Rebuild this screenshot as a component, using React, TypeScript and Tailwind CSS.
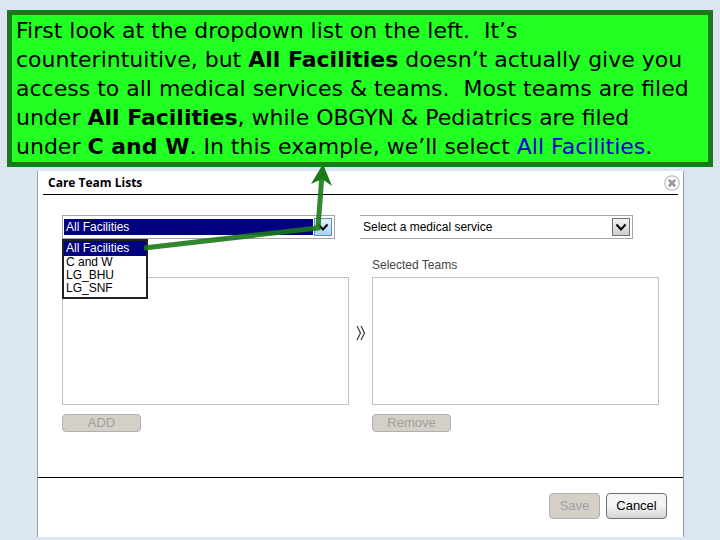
import { useState } from "react"

const facilities = ["All Facilities", "C and W", "LG_BHU", "LG_SNF"]

function Chevron() {
  return (
    <svg width="12" height="9" viewBox="0 0 12 9" aria-hidden="true">
      <path d="M1.5 1.5 L6 6.5 L10.5 1.5" fill="none" stroke="#000000" strokeWidth="2" />
    </svg>
  )
}

function TeamList({ id, label }: { id: string; label?: string }) {
  return <select id={id} multiple aria-label={label} className="h-32 w-full border border-[#c0c0c0] bg-white" />
}

export default function App() {
  const [facility, setFacility] = useState(facilities[0])

  return (
    <div className="relative flex min-h-screen flex-col bg-[#dce6f2] px-[7px] pt-[10px] font-['Liberation_Sans',Arial,sans-serif] text-xs text-black">
      <p className="border-5 border-[#1a7a1a] bg-[#22ff22] py-px pl-1 font-['Comic_Sans_MS','DejaVu_Sans',sans-serif] text-[22px] leading-[29px] whitespace-pre">
        First look at the dropdown list on the left.{"  "}It’s
        <br />
        counterintuitive, but <b>All Facilities</b> doesn’t actually give you
        <br />
        access to all medical services & teams.{"  "}Most teams are filed
        <br />
        under <b>All Facilities</b>, while OBGYN & Pediatrics are filed
        <br />
        under <b>C and W</b>. In this example, we’ll select <span className="text-[#0000d8]">All Facilities</span>.
      </p>

      <section className="mt-1 mr-[29px] ml-[30px] border-x border-[#9a9fa6] bg-white">
        <header className="mx-[5px] flex h-6 items-center justify-between border-b border-black pl-[5px]">
          <h1 className="font-['Tahoma','Open_Sans',sans-serif] text-xs font-bold">Care Team Lists</h1>
          <button type="button" aria-label="Close" className="-mr-0.5">
            <svg width="16" height="16" viewBox="0 0 16 16">
              <circle cx="8" cy="8" r="7.2" fill="#ffffff" stroke="#b4b8bb" strokeWidth="1.2" />
              <path d="M4.8 4.8 L11.2 11.2 M11.2 4.8 L4.8 11.2" stroke="#969ba0" strokeWidth="2.8" />
            </svg>
          </button>
        </header>

        <div className="grid grid-cols-2 gap-[25px] pt-5 pr-[50px] pl-6">
          <div className="relative">
            <div className="flex h-6 items-center border border-[#a6a6a6] pr-0.5 pl-px">
              <select
                aria-label="Facility"
                value={facility}
                onChange={(e) => setFacility(e.target.value)}
                className="h-4 min-w-0 flex-1 appearance-none bg-[#000080] pl-0.5 text-xs leading-4 text-white"
              >
                {facilities.map((f) => (
                  <option key={f}>{f}</option>
                ))}
              </select>
              <span className="pointer-events-none ml-px flex h-[18px] w-[18px] items-center justify-center border border-[#5c8fb5] bg-linear-to-b from-[#e4f3fc] to-[#a8d4f0]">
                <Chevron />
              </span>
            </div>
            <ul
              role="listbox"
              aria-label="Facilities"
              className="absolute top-6 left-0 z-10 w-[86px] border-2 border-[#202020] bg-white pb-0.5 leading-[13px]"
            >
              {facilities.map((f) => (
                <li
                  key={f}
                  role="option"
                  aria-selected={f === facility}
                  onClick={() => setFacility(f)}
                  className="cursor-default pl-0.5 aria-selected:bg-[#000080] aria-selected:py-px aria-selected:text-white"
                >
                  {f}
                </li>
              ))}
            </ul>
          </div>

          <div className="flex h-6 items-center border-y border-r border-[#a6a6a6] pr-0.5 pl-px">
            <select
              aria-label="Medical service"
              className="h-4 min-w-0 flex-1 appearance-none bg-white pl-0.5 text-xs leading-4"
            >
              <option>Select a medical service</option>
            </select>
            <span className="pointer-events-none flex h-[18px] w-[18px] items-center justify-center border border-[#707070] bg-linear-to-b from-[#f2f2f2] to-[#cfcfcf]">
              <Chevron />
            </span>
          </div>
        </div>

        <div className="grid grid-cols-[1fr_23px_1fr] px-6 pt-[18px] pb-[45px]">
          <label htmlFor="selected" className="col-start-3 mb-1 text-xs leading-4 text-[#444444]">
            Selected Teams
          </label>
          <TeamList id="available" label="Available teams" />
          <svg width="10" height="16" viewBox="0 0 10 16" className="mx-auto mt-12" aria-hidden="true">
            <path d="M1 1 L4.5 8 L1 15 M5 1 L8.5 8 L5 15" fill="none" stroke="#444444" strokeWidth="1.3" />
          </svg>
          <TeamList id="selected" />
          <button
            type="button"
            disabled
            className="mt-[9px] h-[18px] w-[79px] rounded-sm border border-[#b0b0b0] bg-[#d4d0c8] text-[13px] leading-4 text-[#a0a0a0]"
          >
            ADD
          </button>
          <button
            type="button"
            disabled
            className="col-start-3 mt-[9px] h-[18px] w-[79px] rounded-sm border border-[#b0b0b0] bg-[#d4d0c8] text-[13px] leading-4 text-[#a0a0a0]"
          >
            Remove
          </button>
        </div>

        <footer className="flex justify-end gap-1.5 border-t border-black pt-[15px] pr-4 pb-[18px] text-[13px]">
          <button
            type="button"
            disabled
            className="h-[26px] w-[51px] rounded-sm border border-[#b0b0b0] bg-[#d4d0c8] text-[#a0a0a0]"
          >
            Save
          </button>
          <button
            type="button"
            className="h-[26px] w-[61px] rounded-sm border border-[#707070] bg-linear-to-b from-[#f4f4f4] from-50% to-[#d4d4d4]"
          >
            Cancel
          </button>
        </footer>
      </section>

      <svg
        width="720"
        height="540"
        viewBox="0 0 720 540"
        className="pointer-events-none absolute top-0 left-0 z-20"
        aria-hidden="true"
      >
        <path d="M144 248 L318 228 L322 174" fill="none" stroke="#1a7a1a" strokeOpacity="0.9" strokeWidth="5" />
        <path d="M323 164 L332 186 L322 179 L311 184 Z" fill="#1a7a1a" />
      </svg>
    </div>
  )
}
